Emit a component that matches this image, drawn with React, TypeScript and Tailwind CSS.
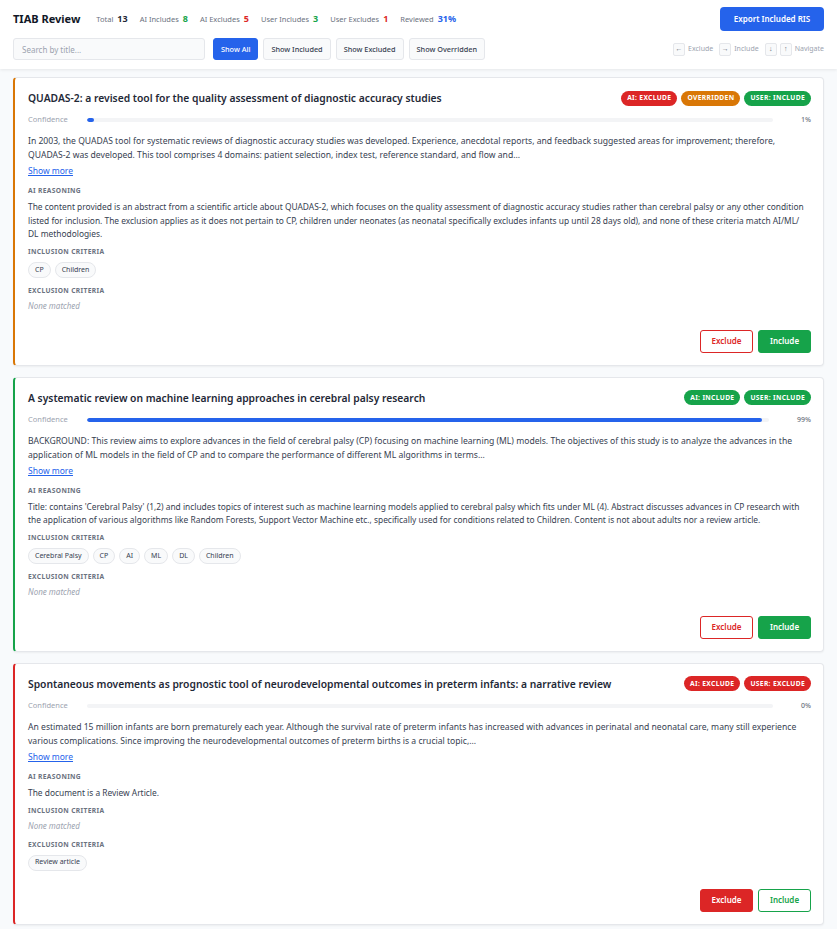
import React, { useState } from 'react';

type Decision = 'include' | 'exclude';

interface Paper {
    id: number;
    title: string;
    confidence: number;
    abstract: string;
    reasoning: string;
    inclusion: string[];
    exclusion: string[];
    ai: Decision;
    user: Decision;
}

const papers: Paper[] = [
    {
        id: 1,
        title: 'QUADAS-2: a revised tool for the quality assessment of diagnostic accuracy studies',
        confidence: 1,
        abstract:
            'In 2003, the QUADAS tool for systematic reviews of diagnostic accuracy studies was developed. Experience, anecdotal reports, and feedback suggested areas for improvement; therefore, QUADAS-2 was developed. This tool comprises 4 domains: patient selection, index test, reference standard, and flow and...',
        reasoning:
            'The content provided is an abstract from a scientific article about QUADAS-2, which focuses on the quality assessment of diagnostic accuracy studies rather than cerebral palsy or any other condition listed for inclusion. The exclusion applies as it does not pertain to CP, children under neonates (as neonatal specifically excludes infants up until 28 days old), and none of these criteria match AI/ML/ DL methodologies.',
        inclusion: ['CP', 'Children'],
        exclusion: [],
        ai: 'exclude',
        user: 'include',
    },
    {
        id: 2,
        title: 'A systematic review on machine learning approaches in cerebral palsy research',
        confidence: 99,
        abstract:
            'BACKGROUND: This review aims to explore advances in the field of cerebral palsy (CP) focusing on machine learning (ML) models. The objectives of this study is to analyze the advances in the application of ML models in the field of CP and to compare the performance of different ML algorithms in terms...',
        reasoning:
            "Title: contains 'Cerebral Palsy' (1,2) and includes topics of interest such as machine learning models applied to cerebral palsy which fits under ML (4). Abstract discusses advances in CP research with the application of various algorithms like Random Forests, Support Vector Machine etc., specifically used for conditions related to Children. Content is not about adults nor a review article.",
        inclusion: ['Cerebral Palsy', 'CP', 'AI', 'ML', 'DL', 'Children'],
        exclusion: [],
        ai: 'include',
        user: 'include',
    },
    {
        id: 3,
        title: 'Spontaneous movements as prognostic tool of neurodevelopmental outcomes in preterm infants: a narrative review',
        confidence: 0,
        abstract:
            'An estimated 15 million infants are born prematurely each year. Although the survival rate of preterm infants has increased with advances in perinatal and neonatal care, many still experience various complications. Since improving the neurodevelopmental outcomes of preterm births is a crucial topic,...',
        reasoning: 'The document is a Review Article.',
        inclusion: [],
        exclusion: ['Review article'],
        ai: 'exclude',
        user: 'exclude',
    },
];

const Badge = ({ label, tone }: { label: string; tone: 'red' | 'green' | 'amber' }) => {
    const cls =
        tone === 'red' ? 'bg-[#dc2626]' : tone === 'green' ? 'bg-[#16a34a]' : 'bg-[#d97706]';
    return (
        <span
            className={`${cls} text-white rounded-full h-[15px] px-[6px] flex items-center text-[6.7px] font-bold tracking-[0.05em] uppercase`}
        >
            {label}
        </span>
    );
};

const SectionLabel = ({ children }: { children: React.ReactNode }) => (
    <div className="text-[6.7px] font-bold tracking-[0.05em] uppercase text-[#6b7280] leading-[10px]">
        {children}
    </div>
);

const Chips = ({ items }: { items: string[] }) =>
    items.length === 0 ? (
        <div className="italic text-[8px] text-[#9ca3af] leading-[13px] mt-[3px]">None matched</div>
    ) : (
        <div className="flex gap-[4px] mt-[5px]">
            {items.map((c) => (
                <span
                    key={c}
                    className="h-[16px] px-[6px] rounded-full border border-[#e5e7eb] bg-[#f9fafb] text-[7px] text-[#374151] flex items-center"
                >
                    {c}
                </span>
            ))}
        </div>
    );

const PaperCard = ({ paper }: { paper: Paper }) => {
    const [decision, setDecision] = useState<Decision>(paper.user);
    const overridden = paper.ai !== decision;
    const accent =
        overridden ? 'border-l-[#d97706]' : decision === 'include' ? 'border-l-[#16a34a]' : 'border-l-[#dc2626]';

    return (
        <div
            className={`bg-white rounded-[4px] border border-[#e5e7eb] border-l-2 ${accent} shadow-[0_1px_2px_rgba(0,0,0,0.05)] pl-[13px] pr-[12px] pt-[12px] pb-[12px]`}
        >
            {/* Title + decision badges */}
            <div className="flex items-center justify-between gap-3">
                <h2 className="text-[10.3px] font-semibold text-[#1f2937] leading-[16px]">{paper.title}</h2>
                <div className="flex gap-[4px] shrink-0">
                    <Badge label={`AI: ${paper.ai}`} tone={paper.ai === 'include' ? 'green' : 'red'} />
                    {overridden && <Badge label="Overridden" tone="amber" />}
                    <Badge label={`User: ${decision}`} tone={decision === 'include' ? 'green' : 'red'} />
                </div>
            </div>

            {/* Confidence */}
            <div className="flex items-center h-[10px] mt-[9px]">
                <span className="text-[7.5px] text-[#9ca3af] w-[59px]">Confidence</span>
                <div className="flex-1 h-[4px] bg-[#f3f4f6] rounded-full overflow-hidden mr-[28px]">
                    <div
                        className="h-full bg-[#2563eb] rounded-full"
                        style={{ width: `${paper.confidence}%` }}
                    />
                </div>
                <span className="text-[7px] text-[#6b7280] font-medium">{paper.confidence}%</span>
            </div>

            {/* Abstract */}
            <p className="text-[8.6px] leading-[14px] text-[#374151] mt-[9px] pr-[4px]">{paper.abstract}</p>
            <button className="block text-[8.5px] leading-[14px] text-[#2563eb] underline mt-[2px]">
                Show more
            </button>

            <div className="mt-[8px]">
                <SectionLabel>AI Reasoning</SectionLabel>
                <p className="text-[8.4px] leading-[13.6px] text-[#374151] mt-[4px]">{paper.reasoning}</p>
            </div>

            <div className="mt-[6px]">
                <SectionLabel>Inclusion Criteria</SectionLabel>
                <Chips items={paper.inclusion} />
            </div>

            <div className="mt-[8px]">
                <SectionLabel>Exclusion Criteria</SectionLabel>
                <Chips items={paper.exclusion} />
            </div>

            {/* Actions */}
            <div className="flex justify-end gap-[5px] mt-[18px]">
                <button
                    onClick={() => setDecision('exclude')}
                    className={`w-[53px] h-[23px] rounded-[3px] text-[8px] font-semibold border ${
                        decision === 'exclude'
                            ? 'bg-[#dc2626] border-[#dc2626] text-white'
                            : 'bg-white border-[#dc2626] text-[#dc2626]'
                    }`}
                >
                    Exclude
                </button>
                <button
                    onClick={() => setDecision('include')}
                    className={`w-[53px] h-[23px] rounded-[3px] text-[8px] font-semibold border ${
                        decision === 'include'
                            ? 'bg-[#16a34a] border-[#16a34a] text-white'
                            : 'bg-white border-[#16a34a] text-[#16a34a]'
                    }`}
                >
                    Include
                </button>
            </div>
        </div>
    );
};

const Stat = ({ label, value, color }: { label: string; value: string; color: string }) => (
    <span className="flex items-baseline gap-[4px]">
        <span className="text-[7.5px] text-[#6b7280]">{label}</span>
        <span className={`text-[9px] font-bold ${color}`}>{value}</span>
    </span>
);

const Key = ({ children }: { children: React.ReactNode }) => (
    <span className="w-[12px] h-[13px] border border-[#e5e7eb] bg-[#f9fafb] rounded-[2px] flex items-center justify-center text-[7px] text-[#6b7280]">
        {children}
    </span>
);

export default function App() {
    const [filter, setFilter] = useState('all');
    const filters = [
        { id: 'all', label: 'Show All' },
        { id: 'included', label: 'Show Included' },
        { id: 'excluded', label: 'Show Excluded' },
        { id: 'overridden', label: 'Show Overridden' },
    ];

    return (
        <div className="min-h-screen bg-[#f8fafc] font-['Noto_Sans',sans-serif]">
            {/* Header */}
            <header className="bg-white shadow-[0_1px_3px_rgba(0,0,0,0.08)] px-[13px] pt-[7px] pb-[9px]">
                <div className="flex items-center justify-between h-[24px]">
                    <div className="flex items-center gap-[12px]">
                        <h1 className="text-[11px] font-bold text-[#111827] mr-[4px]">TIAB Review</h1>
                        <Stat label="Total" value="13" color="text-[#1f2937]" />
                        <Stat label="AI Includes" value="8" color="text-[#16a34a]" />
                        <Stat label="AI Excludes" value="5" color="text-[#dc2626]" />
                        <Stat label="User Includes" value="3" color="text-[#16a34a]" />
                        <Stat label="User Excludes" value="1" color="text-[#dc2626]" />
                        <Stat label="Reviewed" value="31%" color="text-[#2563eb]" />
                    </div>
                    <button className="bg-[#2563eb] text-white text-[8px] font-semibold rounded-[4px] w-[104px] h-[24px]">
                        Export Included RIS
                    </button>
                </div>
                <div className="flex items-center justify-between mt-[7px]">
                    <div className="flex items-center gap-[5px]">
                        <input
                            placeholder="Search by title..."
                            className="w-[192px] h-[22px] bg-[#f9fafb] border border-[#e5e7eb] rounded-[3px] px-[8px] text-[8px] text-[#374151] placeholder:text-[#9ca3af] outline-none mr-[3px]"
                        />
                        {filters.map((f) => (
                            <button
                                key={f.id}
                                onClick={() => setFilter(f.id)}
                                className={`h-[22px] px-[7px] rounded-[3px] text-[7.3px] font-medium border ${
                                    filter === f.id
                                        ? 'bg-[#2563eb] border-[#2563eb] text-white'
                                        : 'bg-[#f9fafb] border-[#e5e7eb] text-[#374151]'
                                }`}
                            >
                                {f.label}
                            </button>
                        ))}
                    </div>
                    <div className="flex items-center gap-[3px] text-[7px] text-[#9ca3af]">
                        <Key>←</Key>
                        <span className="mr-[3px]">Exclude</span>
                        <Key>→</Key>
                        <span className="mr-[3px]">Include</span>
                        <Key>↓</Key>
                        <Key>↑</Key>
                        <span>Navigate</span>
                    </div>
                </div>
            </header>

            {/* Paper list */}
            <main className="px-[13px] pt-[8px] pb-[10px] flex flex-col gap-[11px]">
                {papers.map((p) => (
                    <PaperCard key={p.id} paper={p} />
                ))}
            </main>
        </div>
    );
}
